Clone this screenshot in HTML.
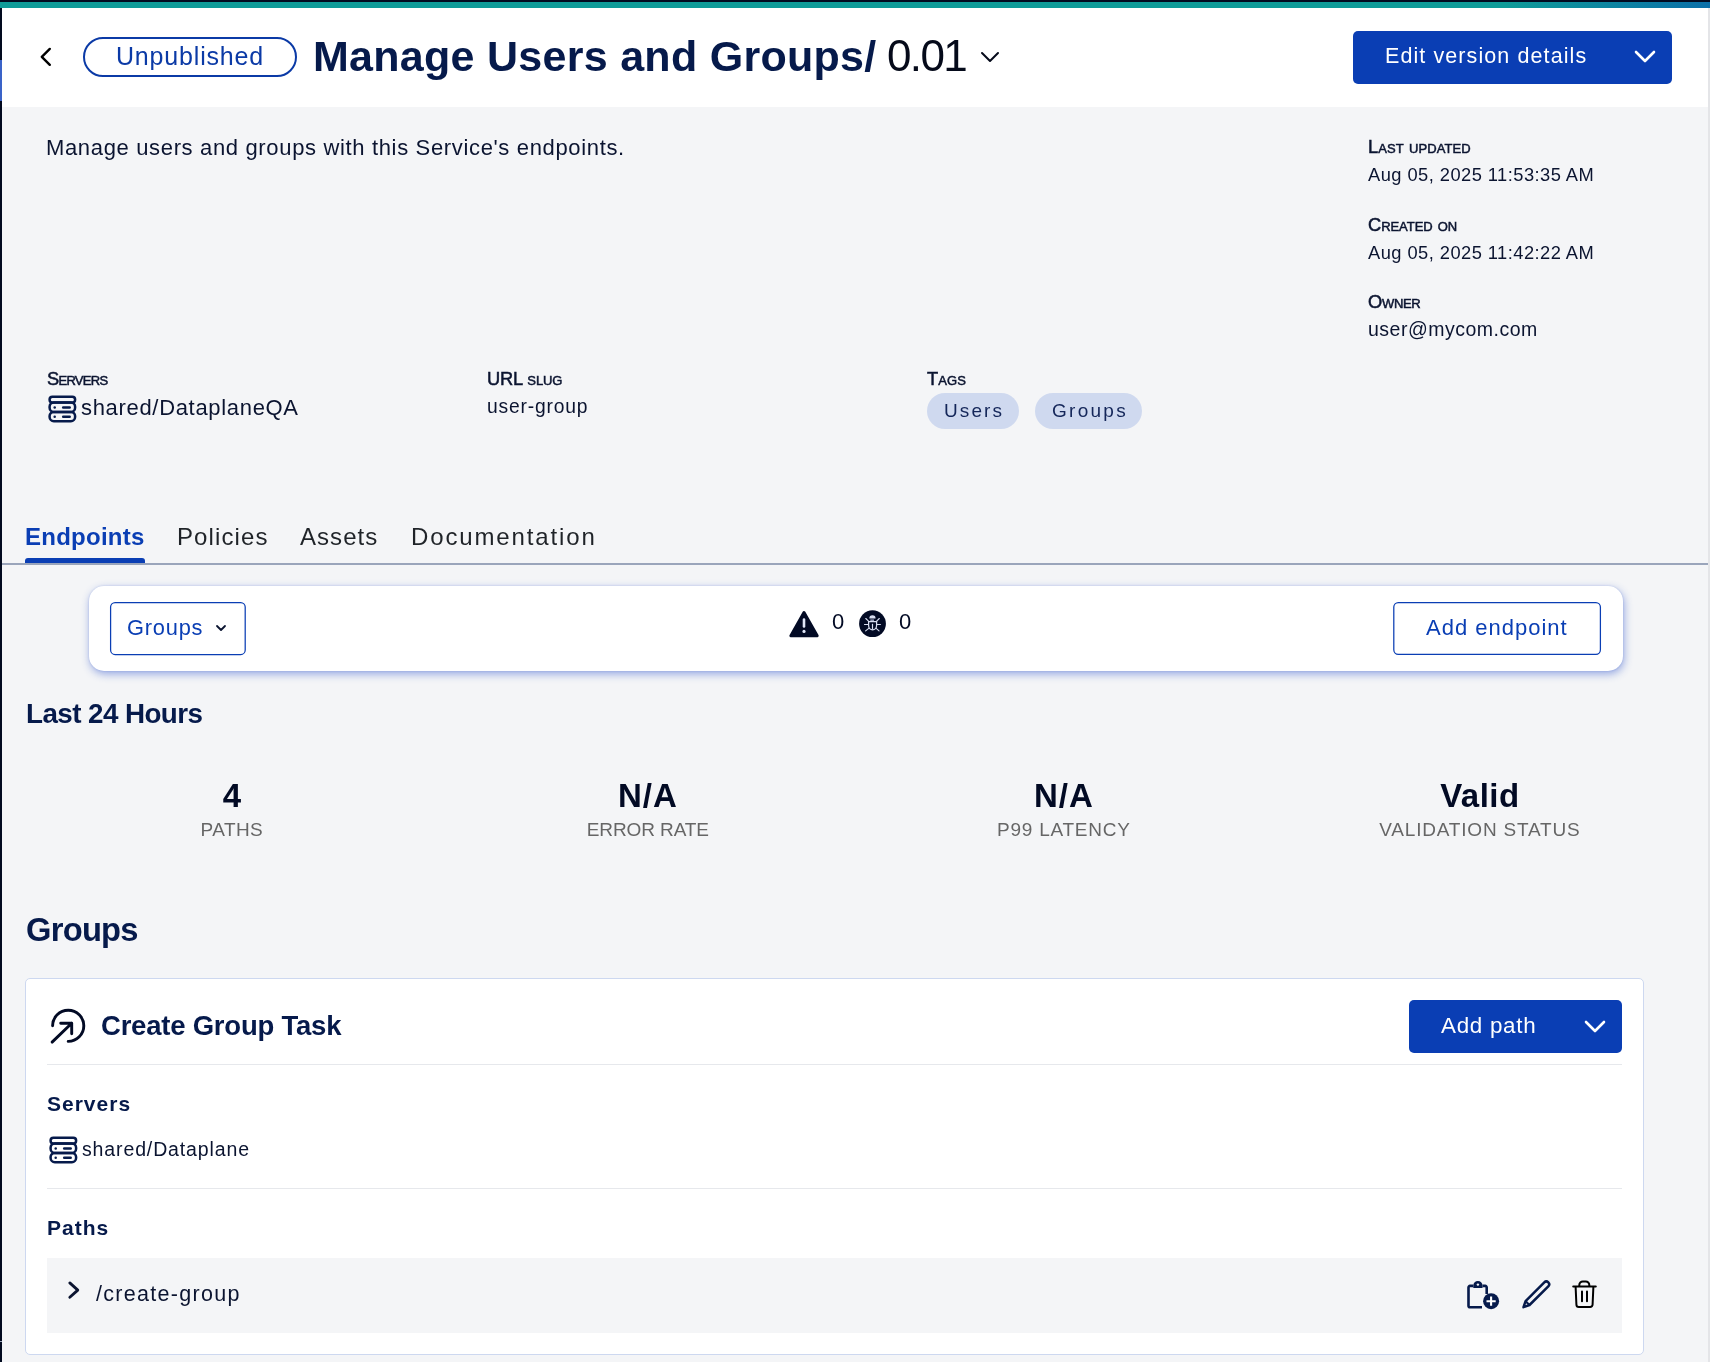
<!DOCTYPE html>
<html><head><meta charset="utf-8">
<style>
html,body{margin:0;padding:0;}
body{width:1710px;height:1362px;position:relative;overflow:hidden;background:#f4f5f7;font-family:"Liberation Sans",sans-serif;color:#0b1430;}
.a{position:absolute;}
.t{position:absolute;white-space:nowrap;line-height:1;will-change:transform;}
.sc{font-variant:small-caps;-webkit-text-stroke:0.5px currentColor;}
</style></head><body>
<!-- top bar -->
<div class="a" style="left:0;top:0;width:1710px;height:2px;background:#020a1f"></div>
<div class="a" style="left:0;top:2px;width:1710px;height:6px;background:linear-gradient(90deg,#0f9b98 0%,#0f9b98 88%,#0b6fa8 100%)"></div>
<!-- header -->
<div class="a" style="left:2px;top:8px;width:1706px;height:99px;background:#fff"></div>
<!-- left bar -->
<div class="a" style="left:0;top:8px;width:2px;height:1354px;background:#020a1f"></div>
<div class="a" style="left:0;top:60px;width:2px;height:41px;background:#3a63c8"></div>
<!-- right scrollbar line -->
<div class="a" style="left:1708px;top:8px;width:2px;height:1354px;background:#e4e5e8"></div>

<!-- back chevron -->
<svg class="a" style="left:36px;top:44px" width="20" height="26" viewBox="0 0 20 26"><path d="M13.8 4.9 L5.8 12.85 L13.8 20.8" fill="none" stroke="#000" stroke-width="2.4" stroke-linecap="round" stroke-linejoin="round"/></svg>

<!-- unpublished pill -->
<div class="a" style="left:83px;top:37px;width:210px;height:36px;border:2px solid #0b3aa6;border-radius:20px;"></div>
<div class="t" style="left:116px;top:43.8px;font-size:25px;color:#0b3aa6;letter-spacing:0.82px">Unpublished</div>

<!-- title -->
<div class="t" style="left:312.8px;top:34.6px;font-size:43px;font-weight:bold;color:#061a4b;letter-spacing:0.28px">Manage Users and Groups/</div>
<div class="t" style="left:887.4px;top:33.8px;font-size:44px;color:#050a1a;letter-spacing:-1.6px">0.01</div>
<svg class="a" style="left:978px;top:48px" width="24" height="18" viewBox="0 0 24 18"><path d="M4 5 L12 13 L20 5" fill="none" stroke="#050a1a" stroke-width="2" stroke-linecap="round" stroke-linejoin="round"/></svg>

<!-- edit version details btn -->
<div class="a" style="left:1353px;top:31px;width:319px;height:53px;background:#0a3eb4;border-radius:5px"></div>
<div class="t" style="left:1385px;top:46.4px;font-size:21.5px;color:#fff;letter-spacing:1.09px">Edit version details</div>
<svg class="a" style="left:1632px;top:46px" width="26" height="20" viewBox="0 0 26 20"><path d="M4 6 L13 15 L22 6" fill="none" stroke="#fff" stroke-width="2.6" stroke-linecap="round" stroke-linejoin="round"/></svg>


<!-- description -->
<div class="t" style="left:46px;top:136.6px;font-size:22px;color:#0b1430;letter-spacing:0.655px">Manage users and groups with this Service's endpoints.</div>

<!-- metadata right -->
<div class="t sc" style="left:1368px;top:137.8px;font-size:18.3px;color:#0b1430;letter-spacing:0.09px">Last updated</div>
<div class="t" style="left:1368px;top:166px;font-size:18.3px;color:#0b1430;letter-spacing:0.46px">Aug 05, 2025 11:53:35 AM</div>
<div class="t sc" style="left:1368px;top:216px;font-size:18.3px;color:#0b1430;letter-spacing:-0.05px">Created on</div>
<div class="t" style="left:1368px;top:244.4px;font-size:18.3px;color:#0b1430;letter-spacing:0.46px">Aug 05, 2025 11:42:22 AM</div>
<div class="t sc" style="left:1368px;top:292.8px;font-size:18.3px;color:#0b1430;letter-spacing:-0.3px">Owner</div>
<div class="t" style="left:1367.5px;top:319.7px;font-size:19.5px;color:#0b1430;letter-spacing:0.5px">user@mycom.com</div>

<!-- servers / url slug / tags -->
<div class="t sc" style="left:47px;top:370.1px;font-size:18.3px;color:#0b1430;letter-spacing:-0.72px">Servers</div>
<svg class="a" style="left:47px;top:394px" width="32" height="30" viewBox="0 0 32 30">
 <rect x="2.6" y="2.7" width="25.5" height="5.8" rx="2.8" fill="none" stroke="#061a4b" stroke-width="2.5"/>
 <rect x="2.6" y="8.5" width="25.5" height="9.4" rx="4.2" fill="none" stroke="#061a4b" stroke-width="2.5"/>
 <rect x="2.6" y="17.9" width="25.5" height="9.3" rx="4.2" fill="none" stroke="#061a4b" stroke-width="2.5"/>
 <circle cx="7.7" cy="13.6" r="1.25" fill="#061a4b"/><line x1="16.2" y1="13.6" x2="22.7" y2="13.6" stroke="#061a4b" stroke-width="2.5" stroke-linecap="round"/>
 <circle cx="7.7" cy="22.7" r="1.25" fill="#061a4b"/><line x1="16.2" y1="22.7" x2="22.7" y2="22.7" stroke="#061a4b" stroke-width="2.5" stroke-linecap="round"/>
</svg>
<div class="t" style="left:81px;top:397.2px;font-size:22px;color:#0b1430;letter-spacing:0.68px">shared/DataplaneQA</div>
<div class="t sc" style="left:487px;top:370.1px;font-size:18.3px;color:#0b1430;letter-spacing:-0.15px">URL slug</div>
<div class="t" style="left:487px;top:396.6px;font-size:19.3px;color:#0b1430;letter-spacing:0.81px">user-group</div>
<div class="t sc" style="left:927px;top:370.1px;font-size:18.3px;color:#0b1430;letter-spacing:0.1px">Tags</div>
<div class="a" style="left:927px;top:393px;width:92px;height:36px;border-radius:18px;background:#cfd9ef"></div>
<div class="t" style="left:944px;top:400.9px;font-size:19px;color:#142659;letter-spacing:2.1px">Users</div>
<div class="a" style="left:1035px;top:393px;width:107px;height:36px;border-radius:18px;background:#cfd9ef"></div>
<div class="t" style="left:1051.5px;top:400.9px;font-size:19px;color:#142659;letter-spacing:2.28px">Groups</div>

<!-- tabs -->
<div class="t" style="left:25.4px;top:524.7px;font-size:24px;font-weight:bold;color:#0a3eb4;letter-spacing:0.25px">Endpoints</div>
<div class="t" style="left:177px;top:524.7px;font-size:24px;color:#1f2328;letter-spacing:1.1px">Policies</div>
<div class="t" style="left:300px;top:524.7px;font-size:24px;color:#1f2328;letter-spacing:1.04px">Assets</div>
<div class="t" style="left:410.5px;top:524.7px;font-size:24px;color:#1f2328;letter-spacing:1.87px">Documentation</div>
<div class="a" style="left:2px;top:563px;width:1706px;height:2px;background:#9aa5bb"></div>
<div class="a" style="left:25px;top:558px;width:120px;height:5px;background:#0a3eb4;border-radius:3px 3px 0 0"></div>

<!-- toolbar card -->
<div class="a" style="left:89px;top:586px;width:1534px;height:85px;background:#fff;border-radius:15px;box-shadow:1px 3px 8px rgba(30,70,200,0.45),0 0 2px rgba(30,70,190,0.2)"></div>
<svg class="a" style="left:109px;top:601px" width="138" height="55" viewBox="0 0 138 55"><rect x="1.6" y="1.5" width="134.6" height="52" rx="4.5" fill="#fff" stroke="#0a3eb4" stroke-width="1.25"/></svg>
<div class="t" style="left:127px;top:617px;font-size:21.8px;color:#0a3eb4;letter-spacing:0.8px">Groups</div>
<svg class="a" style="left:214px;top:622px" width="14" height="12" viewBox="0 0 14 12"><path d="M3 4 L7 8 L11 4" fill="none" stroke="#0b1430" stroke-width="1.8" stroke-linecap="round" stroke-linejoin="round"/></svg>
<svg class="a" style="left:787px;top:609px" width="34" height="30" viewBox="0 0 34 30"><path d="M17 3.6 L30.2 26.7 L3.9 26.7 Z" fill="#020a24" stroke="#020a24" stroke-width="3" stroke-linejoin="round"/><line x1="17" y1="10.6" x2="17" y2="17.4" stroke="#dfe6f7" stroke-width="2.6" stroke-linecap="round"/><circle cx="17" cy="22.4" r="1.6" fill="#dfe6f7"/></svg>
<div class="t" style="left:831.5px;top:611px;font-size:22px;color:#020a24">0</div>
<svg class="a" style="left:858px;top:609px" width="30" height="30" viewBox="0 0 30 30"><circle cx="14.5" cy="14.7" r="13.4" fill="#020a24"/>
 <path d="M11.3 9.5 A3.15 3.3 0 0 1 17.6 9.5 Z" fill="#d8def0"/>
 <rect x="12.3" y="10.4" width="3.7" height="1.7" fill="#8e97b3"/>
 <path d="M10.6 12.7 H18.6 V16.6 A4 4.3 0 0 1 10.6 16.6 Z" fill="none" stroke="#d8def0" stroke-width="1.25"/>
 <line x1="14.5" y1="14.8" x2="14.5" y2="20.6" stroke="#d8def0" stroke-width="1.2"/>
 <path d="M7.8 9.5 L10.75 12.4 M21.3 9.5 L18.4 12.4 M6.5 15.45 H10.2 M19.2 15.45 H22.4 M7.6 21.9 L10.75 19.3 M21.05 21.9 L18.15 19.3" stroke="#d8def0" stroke-width="1.1" stroke-linecap="round"/></svg>
<div class="t" style="left:899px;top:611px;font-size:22px;color:#020a24">0</div>
<svg class="a" style="left:1392px;top:601px" width="211" height="55" viewBox="0 0 211 55"><rect x="1.8" y="1.5" width="206.6" height="51.8" rx="4.5" fill="#fff" stroke="#0a3eb4" stroke-width="1.25"/></svg>
<div class="t" style="left:1426px;top:617.4px;font-size:22px;color:#0a3eb4;letter-spacing:1px">Add endpoint</div>

<!-- last 24 hours -->
<div class="t" style="left:26px;top:699.6px;font-size:27.8px;font-weight:bold;color:#061a4b;letter-spacing:-0.575px">Last 24 Hours</div>
<div class="a" style="left:24.3px;top:770px;width:1663px;height:80px;display:flex">
 <div style="flex:1;position:relative"><div class="t" style="left:0;right:0;text-align:center;top:8.9px;font-size:33px;font-weight:bold;color:#020a24">4</div><div class="t" style="left:0;right:0;text-align:center;top:50.4px;font-size:19px;color:#666;letter-spacing:0.42px">PATHS</div></div>
 <div style="flex:1;position:relative"><div class="t" style="left:0;right:0;text-align:center;top:8.9px;font-size:33px;font-weight:bold;color:#020a24;letter-spacing:1px">N/A</div><div class="t" style="left:0;right:0;text-align:center;top:50.4px;font-size:19px;color:#666;letter-spacing:-0.1px">ERROR RATE</div></div>
 <div style="flex:1;position:relative"><div class="t" style="left:0;right:0;text-align:center;top:8.9px;font-size:33px;font-weight:bold;color:#020a24;letter-spacing:1px">N/A</div><div class="t" style="left:0;right:0;text-align:center;top:50.4px;font-size:19px;color:#666;letter-spacing:0.76px">P99 LATENCY</div></div>
 <div style="flex:1;position:relative"><div class="t" style="left:0;right:0;text-align:center;top:8.9px;font-size:33px;font-weight:bold;color:#020a24;letter-spacing:0.45px">Valid</div><div class="t" style="left:0;right:0;text-align:center;top:50.4px;font-size:19px;color:#666;letter-spacing:0.8px">VALIDATION STATUS</div></div>
</div>

<!-- groups -->
<div class="t" style="left:26px;top:914.1px;font-size:32.7px;font-weight:bold;color:#061a4b;letter-spacing:-0.74px">Groups</div>
<div class="a" style="left:25px;top:978px;width:1617px;height:375px;background:#fff;border:1.5px solid #cdd8f0;border-radius:5px"></div>
<svg class="a" style="left:40px;top:995px" width="60" height="60" viewBox="0 0 60 60"><path d="M12.6 30.8 A15.6 15.6 0 1 1 28.2 46.4" fill="none" stroke="#020a24" stroke-width="2.9" stroke-linecap="round"/><path d="M12.1 47.1 L31.7 28.2 M20.7 28.2 L31.7 28.2 L31.7 38.8" fill="none" stroke="#020a24" stroke-width="2.9" stroke-linecap="round" stroke-linejoin="round"/></svg>
<div class="t" style="left:101px;top:1011.9px;font-size:27.5px;font-weight:bold;color:#061a4b;letter-spacing:-0.22px">Create Group Task</div>
<div class="a" style="left:1409px;top:1000px;width:213px;height:53px;background:#0a3eb4;border-radius:5px"></div>
<div class="t" style="left:1441px;top:1015.3px;font-size:22.4px;color:#fff;letter-spacing:0.71px">Add path</div>
<svg class="a" style="left:1582px;top:1016px" width="26" height="20" viewBox="0 0 26 20"><path d="M4 6 L13 15 L22 6" fill="none" stroke="#fff" stroke-width="2.6" stroke-linecap="round" stroke-linejoin="round"/></svg>
<div class="a" style="left:47px;top:1064px;width:1575px;height:1px;background:#e6e8ec"></div>
<div class="t" style="left:47px;top:1093.1px;font-size:21px;font-weight:bold;color:#061a4b;letter-spacing:1px">Servers</div>
<svg class="a" style="left:48px;top:1135.4px" width="32" height="30" viewBox="0 0 32 30">
 <rect x="2.6" y="2.7" width="25.5" height="5.8" rx="2.8" fill="none" stroke="#061a4b" stroke-width="2.5"/>
 <rect x="2.6" y="8.5" width="25.5" height="9.4" rx="4.2" fill="none" stroke="#061a4b" stroke-width="2.5"/>
 <rect x="2.6" y="17.9" width="25.5" height="9.3" rx="4.2" fill="none" stroke="#061a4b" stroke-width="2.5"/>
 <circle cx="7.7" cy="13.6" r="1.25" fill="#061a4b"/><line x1="16.2" y1="13.6" x2="22.7" y2="13.6" stroke="#061a4b" stroke-width="2.5" stroke-linecap="round"/>
 <circle cx="7.7" cy="22.7" r="1.25" fill="#061a4b"/><line x1="16.2" y1="22.7" x2="22.7" y2="22.7" stroke="#061a4b" stroke-width="2.5" stroke-linecap="round"/>
</svg>
<div class="t" style="left:82px;top:1140.4px;font-size:19.5px;color:#0b1430;letter-spacing:0.87px">shared/Dataplane</div>
<div class="a" style="left:47px;top:1188px;width:1575px;height:1px;background:#e6e8ec"></div>
<div class="t" style="left:47px;top:1217.2px;font-size:21px;font-weight:bold;color:#061a4b;letter-spacing:1px">Paths</div>
<div class="a" style="left:47px;top:1258px;width:1575px;height:75px;background:#f4f5f7"></div>
<svg class="a" style="left:62px;top:1278px" width="22" height="24" viewBox="0 0 22 24"><path d="M7.8 4.9 L15.8 12.1 L7.8 19.3" fill="none" stroke="#0b1430" stroke-width="2.8" stroke-linecap="round" stroke-linejoin="round"/></svg>
<div class="t" style="left:96px;top:1283.8px;font-size:21.5px;color:#0b1430;letter-spacing:1.3px">/create-group</div>
<!-- clipboard plus -->
<svg class="a" style="left:1464px;top:1278px" width="38" height="34" viewBox="0 0 38 34"><path d="M9.3 7.9 H6 a1.5 1.5 0 0 0 -1.5 1.5 V27.8 a1.5 1.5 0 0 0 1.5 1.5 H18" fill="none" stroke="#061a4b" stroke-width="2.6" stroke-linejoin="round"/><path d="M18.5 7.9 H21.2 a1.5 1.5 0 0 1 1.5 1.5 V16" fill="none" stroke="#061a4b" stroke-width="2.6"/><path d="M9.3 9.9 V7.6 a4.6 4.6 0 0 1 9.2 0 V9.9 Z" fill="#061a4b"/><circle cx="13.9" cy="6.6" r="1.2" fill="#f4f5f7"/><circle cx="27.1" cy="23.2" r="8" fill="#061a4b"/><path d="M27.1 18.6 V27.8 M22.5 23.2 H31.7" stroke="#fff" stroke-width="2.1"/></svg>
<!-- pencil -->
<svg class="a" style="left:1519px;top:1277px" width="36" height="34" viewBox="0 0 36 34"><path d="M25.3 5.3 a2.8 2.8 0 0 1 4 4 L10.5 28 L4.5 30.2 L6.6 24.2 Z" fill="none" stroke="#061a4b" stroke-width="2.5" stroke-linejoin="round"/><path d="M6.6 24.2 L10.5 28" stroke="#061a4b" stroke-width="2.2"/></svg>
<!-- trash -->
<svg class="a" style="left:1569px;top:1277px" width="32" height="34" viewBox="0 0 32 34"><path d="M4.2 9.5 H26.8 M10.3 9.5 V7.9 a3.5 3.5 0 0 1 3.5 -3.5 H16.8 a3.5 3.5 0 0 1 3.5 3.5 V9.5 M6.6 9.5 L7.4 27.5 a2.5 2.5 0 0 0 2.5 2.5 H21.1 a2.5 2.5 0 0 0 2.5 -2.5 L24.4 9.5 M13 14.4 V24.2 M18 14.4 V24.2" fill="none" stroke="#000" stroke-width="2" stroke-linecap="round" stroke-linejoin="round"/></svg>

<!-- left bar bottom mark -->
<div class="a" style="left:0;top:1341px;width:2px;height:1px;background:#9aa5bb"></div>

</body></html>
